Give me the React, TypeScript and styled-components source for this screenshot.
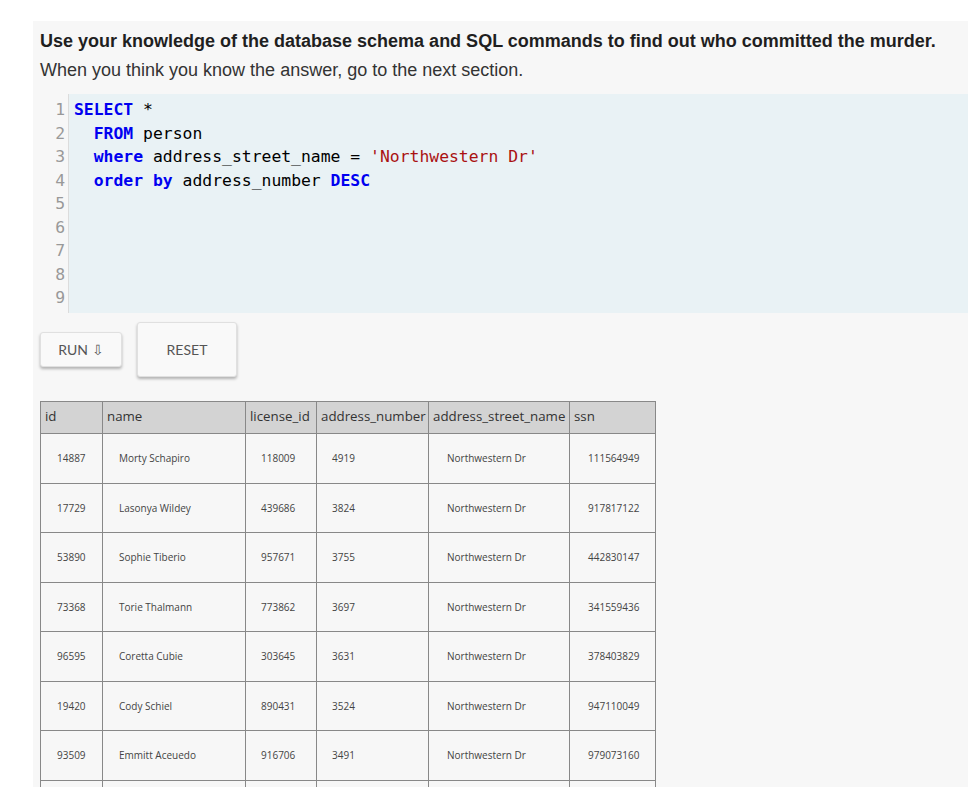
import React from "react";
import styled, { createGlobalStyle } from "styled-components";

const GlobalStyle = createGlobalStyle`
  html, body { margin: 0; padding: 0; background: #ffffff; }
  body { overflow: hidden; }
`;

const Page = styled.div`
  padding: 21px 0 0 33px;
`;

const Panel = styled.section`
  background: #f7f7f7;
  padding: 6px 0 40px 7px;
  font-family: "Liberation Sans", Arial, sans-serif;
`;

const Title = styled.h3`
  margin: 0;
  font-size: 18px;
  line-height: 28px;
  font-weight: 700;
  color: #1f1f1f;
  white-space: nowrap;
`;

const Subtitle = styled.p`
  margin: 1px 0 0;
  font-size: 18px;
  line-height: 28px;
  color: #333;
  white-space: nowrap;
`;

const Editor = styled.div`
  margin-top: 10px;
  height: 219px;
  display: flex;
  background: #e9f2f5;
  font-family: "DejaVu Sans Mono", monospace;
  font-size: 16.4px;
`;

const Gutter = styled.div`
  width: 29px;
  box-sizing: border-box;
  background: #f7f7f7;
  border-right: 1px solid #dcdcdc;
  padding: 4px 3px 0 0;
  text-align: right;
  color: #999;
`;

const Code = styled.div`
  padding: 4px 0 0 5px;
  color: #000;
  white-space: pre;
`;

const Line = styled.div`
  height: 23.5px;
  line-height: 23.5px;
`;

const Kw = styled.span`
  color: #0000f0;
  font-weight: 700;
`;

const Str = styled.span`
  color: #aa1111;
`;

const ButtonRow = styled.div`
  display: flex;
  align-items: center;
  gap: 15px;
  margin-top: 9px;
`;

const Button = styled.button<{ $w: number; $h: number }>`
  width: ${(p) => p.$w}px;
  height: ${(p) => p.$h}px;
  background: #f9f9f9;
  border: 1px solid #e0e0e0;
  border-radius: 3px;
  box-shadow: 0 2px 3px rgba(0, 0, 0, 0.28);
  font-family: Lato, "Open Sans", sans-serif;
  font-size: 14px;
  color: #555;
  padding: 0;
`;

const Table = styled.table`
  margin-top: 24px;
  border-collapse: collapse;
  table-layout: fixed;
  font-family: "Open Sans", sans-serif;
`;

const Th = styled.th<{ $w: number }>`
  width: ${(p) => p.$w}px;
  height: 32px;
  box-sizing: border-box;
  padding: 0 0 3px 4px;
  background: #d3d3d3;
  border: 1px solid #888;
  text-align: left;
  font-weight: 400;
  font-size: 13.3px;
  color: #333;
  white-space: nowrap;
`;

const Td = styled.td<{ $pad?: number }>`
  height: 49.5px;
  box-sizing: border-box;
  padding: 0 0 0 ${(p) => p.$pad ?? 16}px;
  border: 1px solid #888;
  font-size: 10px;
  color: #444;
  white-space: nowrap;
`;

const columns: { key: string; w: number; pad: number }[] = [
  { key: "id", w: 62, pad: 16 },
  { key: "name", w: 143, pad: 16 },
  { key: "license_id", w: 71, pad: 15 },
  { key: "address_number", w: 112, pad: 15 },
  { key: "address_street_name", w: 141, pad: 18 },
  { key: "ssn", w: 86, pad: 18 },
];

const rows: string[][] = [
  ["14887", "Morty Schapiro", "118009", "4919", "Northwestern Dr", "111564949"],
  ["17729", "Lasonya Wildey", "439686", "3824", "Northwestern Dr", "917817122"],
  ["53890", "Sophie Tiberio", "957671", "3755", "Northwestern Dr", "442830147"],
  ["73368", "Torie Thalmann", "773862", "3697", "Northwestern Dr", "341559436"],
  ["96595", "Coretta Cubie", "303645", "3631", "Northwestern Dr", "378403829"],
  ["19420", "Cody Schiel", "890431", "3524", "Northwestern Dr", "947110049"],
  ["93509", "Emmitt Aceuedo", "916706", "3491", "Northwestern Dr", "979073160"],
  ["89982", "Jayme Swarr", "601243", "3387", "Northwestern Dr", "516423790"],
];

export default function App() {
  return (
    <>
      <GlobalStyle />
      <Page>
        <Panel>
          <Title>
            Use your knowledge of the database schema and SQL commands to find out who committed the murder.
          </Title>
          <Subtitle>When you think you know the answer, go to the next section.</Subtitle>
          <Editor>
            <Gutter>
              {[1, 2, 3, 4, 5, 6, 7, 8, 9].map((n) => (
                <Line key={n}>{n}</Line>
              ))}
            </Gutter>
            <Code>
              <Line>
                <Kw>SELECT</Kw> *
              </Line>
              <Line>
                {"  "}
                <Kw>FROM</Kw> person
              </Line>
              <Line>
                {"  "}
                <Kw>where</Kw> address_street_name = <Str>'Northwestern Dr'</Str>
              </Line>
              <Line>
                {"  "}
                <Kw>order</Kw> <Kw>by</Kw> address_number <Kw>DESC</Kw>
              </Line>
            </Code>
          </Editor>
          <ButtonRow>
            <Button $w={82} $h={35}>RUN ⇩</Button>
            <Button $w={100} $h={55}>RESET</Button>
          </ButtonRow>
          <Table>
            <thead>
              <tr>
                {columns.map((c) => (
                  <Th key={c.key} $w={c.w}>
                    {c.key}
                  </Th>
                ))}
              </tr>
            </thead>
            <tbody>
              {rows.map((r) => (
                <tr key={r[0]}>
                  {r.map((v, i) => (
                    <Td key={i} $pad={columns[i].pad}>
                      {v}
                    </Td>
                  ))}
                </tr>
              ))}
            </tbody>
          </Table>
        </Panel>
      </Page>
    </>
  );
}
